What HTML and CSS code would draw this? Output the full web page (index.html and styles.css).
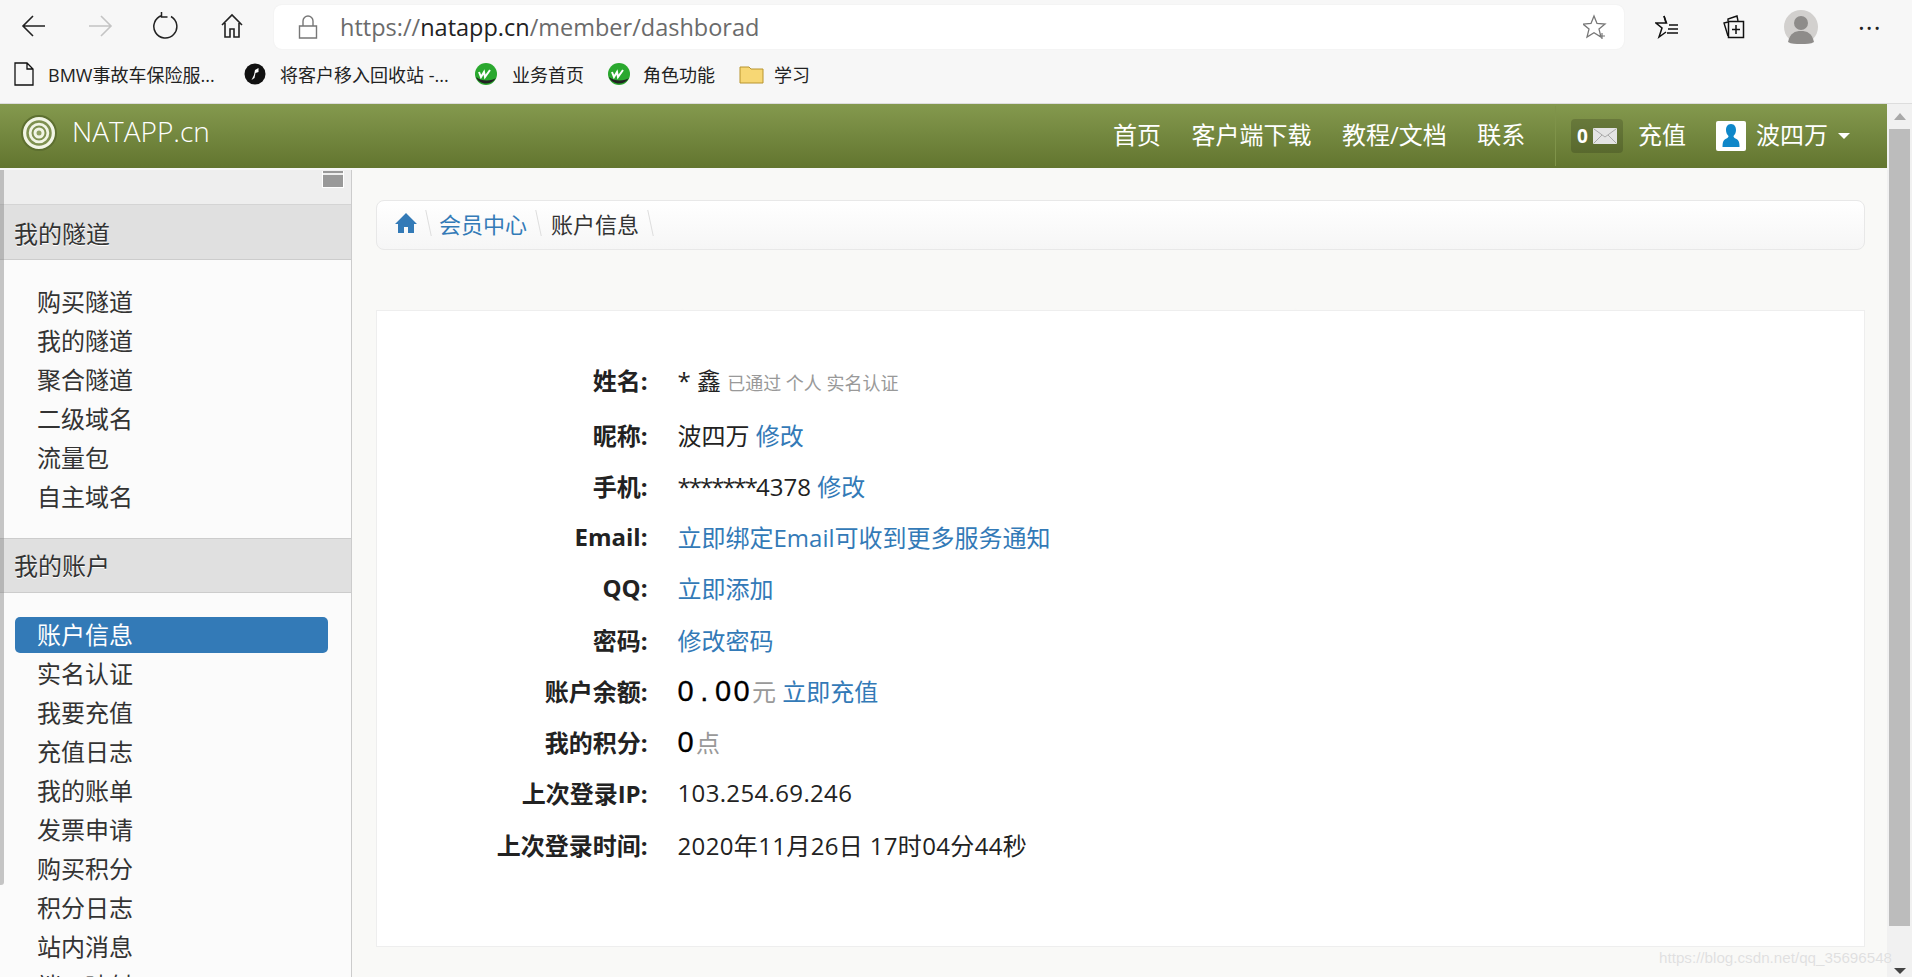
FILE: index.html
```html
<!DOCTYPE html>
<html lang="zh-CN">
<head>
  <meta charset="UTF-8" />
  <title>NATAPP - 账户信息</title>
  <link rel="stylesheet" href="styles.css">
</head>
<body>

<!-- browser bars -->
<div class="toolbar">
  <div class="tool-left">
    <svg class="ic" width="26" height="26" viewBox="0 0 26 26"><path d="M24 13H2M12 3 2 13l10 10" fill="none" stroke="#222" stroke-width="1.6"/></svg>
    <svg class="ic" width="26" height="26" viewBox="0 0 26 26"><path d="M2 13h22M14 3l10 10-10 10" fill="none" stroke="#c4c4c4" stroke-width="1.6"/></svg>
    <svg class="ic" width="26" height="28" viewBox="0 0 26 28"><path d="M9 3.5A11.5 11.5 0 1 0 18 4.5M8.500 0v5h6" fill="none" stroke="#222" stroke-width="1.5"/></svg>
    <svg class="ic" width="24" height="26" viewBox="0 0 24 26"><path d="M2 12 12 2l10 10M5 10v14h5v-8h4v8h5V10" fill="none" stroke="#222" stroke-width="1.6"/></svg>
  </div>
  <div class="address">
    <svg width="20" height="24" viewBox="0 0 20 24"><path d="M5 11V6a5 5 0 0 1 10 0v5M1.500 11h17v12h-17z" fill="none" stroke="#777" stroke-width="1.4"/></svg>
    <span class="url">https://<b>natapp.cn</b>/member/dashborad</span>
    <svg class="url-star" width="24" height="26" viewBox="0 0 24 26"><path d="M11 2l3 7.500 8 .6-6 5 2 7.900-7-4.300-7 4.300 2-7.900-6-5 8-.6z" fill="none" stroke="#777" stroke-width="1.300"/><path d="M19 19v6M16 22h6" stroke="#777" stroke-width="1.200"/></svg>
  </div>
  <div class="tool-right">
    <svg width="24" height="26" viewBox="0 0 24 26"><path d="M9 2l2.500 7H1l6 5-3 9 7-5" fill="none" stroke="#111" stroke-width="1.500"/><path d="M9 2l2 7M14 11h9M13 15h10M12 19h11" stroke="#111" stroke-width="1.500"/></svg>
    <svg width="23" height="26" viewBox="0 0 23 26"><path d="M6 7V5l9-3 1 5M6 22 2 9l4-1" fill="none" stroke="#111" stroke-width="1.400"/><path d="M6.500 7.500h15v16h-15zM14 11v9M10 15.500h8" fill="none" stroke="#111" stroke-width="1.500"/></svg>
    <svg width="34" height="34" viewBox="0 0 34 34"><ellipse cx="17" cy="17" rx="17" ry="17" fill="#d2d0ce"/><ellipse cx="17" cy="13" rx="7" ry="7" fill="#8e8c8a"/><path d="M4 32c2-9 7-11 13-11s11 2 13 11c-3 2-8 2-13 2s-10 0-13-2z" fill="#8e8c8a"/></svg>
    <span class="more">&middot;&middot;&middot;</span>
  </div>
</div>

<div class="bookmarks">
  <div class="bm">
    <svg width="20" height="24" viewBox="0 0 20 24"><path d="M1 1h12l6 6v16H1zM13 1v6h6" fill="none" stroke="#111" stroke-width="1.300"/></svg>
    <span class="bm-first">BMW事故车保险服...</span>
  </div>
  <div class="bm">
    <svg width="22" height="22" viewBox="0 0 22 22"><circle cx="11" cy="11" r="10.500" fill="#111"/><path d="M14.500 5 11 7l-1 5-2.500 5 3-2 1-5 3-1z" fill="#fff"/></svg>
    <span class="bm-second">将客户移入回收站 -...</span>
  </div>
  <div class="bm bm-third">
    <svg width="24" height="24" viewBox="0 0 24 24"><circle cx="12" cy="12" r="11" fill="#2aa82e"/><path d="M2 15c3 8 15 9 20 1-4 3-14 4-20-1z" fill="#222"/><path d="M5 10l2 5 3-5 1 5 5-7" fill="none" stroke="#fff" stroke-width="2"/></svg>
    <span>业务首页</span>
  </div>
  <div class="bm bm-fourth">
    <svg width="24" height="24" viewBox="0 0 24 24"><circle cx="12" cy="12" r="11" fill="#2aa82e"/><path d="M2 15c3 8 15 9 20 1-4 3-14 4-20-1z" fill="#222"/><path d="M5 10l2 5 3-5 1 5 5-7" fill="none" stroke="#fff" stroke-width="2"/></svg>
    <span>角色功能</span>
  </div>
  <div class="bm bm-fifth">
    <svg width="25" height="20" viewBox="0 0 25 20"><path d="M1 3h9l2 2h12v14H1z" fill="#f7d774" stroke="#b8942f"/></svg>
    <span>学习</span>
  </div>
</div>

<div class="page">
  <div class="site">
    <header class="navbar">
      <a class="brand">
        <svg width="38" height="36" viewBox="0 0 38 36">
          <ellipse cx="19" cy="18" rx="17" ry="17" fill="#f2f5e6" stroke="#5d6f30" stroke-width="2"/>
          <ellipse cx="19" cy="18" rx="11.500" ry="11.500" fill="none" stroke="#7e9050" stroke-width="2.500"/>
          <ellipse cx="19" cy="18" rx="6.500" ry="6.500" fill="none" stroke="#7e9050" stroke-width="2"/>
          <circle cx="19" cy="18" r="2.500" fill="#8fa063"/>
        </svg>
        <span class="brand-name">NATAPP.cn</span>
      </a>
      <nav class="nav-links">
        <a>首页</a>
        <a>客户端下载</a>
        <a>教程/文档</a>
        <a>联系</a>
      </nav>
      <div class="nav-user">
        <span class="msg-badge">0
          <svg width="24" height="16" viewBox="0 0 24 16"><rect width="24" height="16" rx="1" fill="#e4e4e4"/><path d="M1 1l11 8 11-8M1 15l8-8M23 15l-8-8" fill="none" stroke="#aaa"/></svg>
        </span>
        <a class="nav-pay">充值</a>
        <span class="nav-avatar">
          <svg width="30" height="30" viewBox="0 0 30 30"><rect width="30" height="30" rx="2" fill="#fff"/><path d="M15 3c3.500 0 5 3 5 6 0 2.500-1 4.500-2.500 6 0 1 .5 2 3 3 2 1 3 3 3 8H6.500c0-5 1-7 3-8 2.500-1 3-2 3-3C11 13.500 10 11.500 10 9c0-3 1.500-6 5-6z" fill="#0f87c9"/></svg>
        </span>
        <span class="nav-name">波四万</span>
        <span class="caret"></span>
      </div>
    </header>

    <div class="layout">
      <aside class="sidebar">
        <div class="side-scroll"></div>
        <div class="side-top"><span class="side-toggle"></span></div>

        <div class="side-head">我的隧道</div>
        <ul class="side-list">
          <li>购买隧道</li>
          <li>我的隧道</li>
          <li>聚合隧道</li>
          <li>二级域名</li>
          <li>流量包</li>
          <li>自主域名</li>
        </ul>

        <div class="side-head">我的账户</div>
        <ul class="side-list">
          <li class="active">账户信息</li>
          <li>实名认证</li>
          <li>我要充值</li>
          <li>充值日志</li>
          <li>我的账单</li>
          <li>发票申请</li>
          <li>购买积分</li>
          <li>积分日志</li>
          <li>站内消息</li>
          <li>端口映射</li>
        </ul>
      </aside>

      <main class="main">
        <div class="crumbs">
          <span class="crumb">
            <svg width="22" height="22" viewBox="0 0 22 22"><path d="M11 1 0 12h3v9h6v-6h4v6h6v-9h3z" fill="#337ab7"/></svg>
          </span>
          <span class="crumb link">会员中心</span>
          <span class="crumb">账户信息</span>
        </div>

        <section class="card">
          <div class="row row-first">
            <label>姓名:</label>
            <div class="val">* 鑫 <small>已通过 个人 实名认证</small></div>
          </div>
          <div class="row">
            <label>昵称:</label>
            <div class="val">波四万 <a>修改</a></div>
          </div>
          <div class="row">
            <label>手机:</label>
            <div class="val"><span class="stars">*******</span>4378 <a>修改</a></div>
          </div>
          <div class="row">
            <label>Email:</label>
            <div class="val"><a>立即绑定Email可收到更多服务通知</a></div>
          </div>
          <div class="row">
            <label>QQ:</label>
            <div class="val"><a>立即添加</a></div>
          </div>
          <div class="row">
            <label>密码:</label>
            <div class="val"><a>修改密码</a></div>
          </div>
          <div class="row">
            <label>账户余额:</label>
            <div class="val"><span class="num">0<span class="dot">.</span>00</span><span class="unit">元</span> <a>立即充值</a></div>
          </div>
          <div class="row">
            <label>我的积分:</label>
            <div class="val"><span class="num">0</span><span class="unit">点</span></div>
          </div>
          <div class="row">
            <label>上次登录IP:</label>
            <div class="val digits">103.254.69.246</div>
          </div>
          <div class="row">
            <label>上次登录时间:</label>
            <div class="val digits">2020年11月26日 17时04分44秒</div>
          </div>
        </section>
      </main>
    </div>
  </div>

  <div class="scrollbar">
    <span class="arrow-up"></span>
    <div class="thumb"></div>
    <span class="arrow-down"></span>
  </div>
</div>

<div class="watermark">https://blog.csdn.net/qq_35696548</div>

</body>
</html>
```

FILE: styles.css
```css
* { box-sizing: border-box; margin: 0; padding: 0; }
html, body {
  width: 1912px;
  height: 977px;
  overflow: hidden;
}
body {
  font-family: 'Open Sans', 'Noto Sans CJK SC', sans-serif;
  background: #f7f7f7;
  color: #333;
  font-size: 24px;
  position: relative;
}

/* browser bars */
.toolbar {
  height: 60px;
  display: flex;
  align-items: flex-start;
  background: #f7f7f7;
  padding-top: 5px;
}
.tool-left {
  width: 274px;
  height: 42px;
  display: flex;
  align-items: center;
  padding-left: 21px;
}
.tool-left svg:nth-child(1) { margin-right: 40px; }
.tool-left svg:nth-child(2) { margin-right: 40px; }
.tool-left svg:nth-child(3) { margin-right: 41px; }
.address {
  width: 1350px;
  height: 44px;
  background: #fff;
  border-radius: 8px;
  display: flex;
  align-items: center;
  padding: 0 17px 0 24px;
  box-shadow: 0 0 2px rgba(0,0,0,0.06);
}
.url {
  flex-grow: 1;
  margin-left: 22px;
  font-size: 23.500px;
  color: #6b6b6b;
  white-space: nowrap;
}
.url b {
  font-weight: normal;
  color: #222;
}
.tool-right {
  flex-grow: 1;
  height: 44px;
  display: flex;
  align-items: center;
  padding-left: 31px;
  gap: 43px;
}
.tool-right svg:nth-child(3) { margin-left: -4px; margin-right: -3px; }
.more {
  font-size: 26px;
  line-height: 26px;
  letter-spacing: 1px;
  color: #222;
}
.bookmarks {
  height: 44px;
  display: flex;
  align-items: center;
  padding: 0 0 15px 14px;
  background: #f7f7f7;
  gap: 25px;
  font-size: 18px;
  color: #222;
  border-bottom: 1px solid #ddd;
}
.bm {
  display: flex;
  align-items: center;
  gap: 14px;
}
.bm-first { width: 171px; white-space: nowrap; }
.bm-second { width: 169px; white-space: nowrap; }
.bm-third { margin-right: -2px; }
.bm-fourth { gap: 12px; margin-right: -1px; }
.bm-fifth { gap: 10px; }

/* page */
.page {
  display: flex;
  height: 873px;
}
.site {
  width: 1887px;
}
.navbar {
  height: 64px;
  display: flex;
  align-items: center;
  background: linear-gradient(#84994e, #62752f);
  color: #fff;
  margin-bottom: 2px;
}
.brand {
  width: 1113px;
  display: flex;
  align-items: center;
  padding-left: 20px;
  gap: 14px;
  font-size: 28px;
  font-weight: 300;
  margin-top: -6px;
}
.brand-name { padding-bottom: 4px; }
.nav-links {
  width: 442px;
  display: flex;
  gap: 30.500px;
  font-size: 24px;
  padding-bottom: 5px;
}
.nav-user {
  height: 60px;
  border-left: 1px solid #7f9349;
  display: flex;
  align-items: center;
  padding-left: 15px;
}
.msg-badge {
  width: 52px;
  height: 34px;
  background: rgba(0,0,0,0.16);
  border-radius: 4px;
  display: flex;
  align-items: center;
  gap: 5px;
  padding-left: 6px;
  font-size: 19px;
  font-weight: bold;
}
.nav-pay {
  margin-left: 15px;
  width: 78px;
  padding-bottom: 5px;
}
.nav-avatar {
  height: 30px;
  display: block;
}
.nav-name {
  margin-left: 10px;
  width: 82px;
  padding-bottom: 5px;
}
.caret {
  border-top: 6px solid #fff;
  border-left: 6px solid transparent;
  border-right: 6px solid transparent;
}

.layout {
  display: flex;
  height: 807px;
}

/* sidebar */
.sidebar {
  width: 352px;
  background: #fbfbfb;
  border-right: 1px solid #ccc;
  position: relative;
  overflow: hidden;
}
.side-scroll {
  position: absolute;
  left: 0;
  top: 0;
  width: 4px;
  height: 715px;
  background: rgba(130,130,130,0.45);
  border-radius: 0 0 3px 0;
}
.side-top {
  height: 35px;
  background: #eee;
  border-bottom: 1px solid #d4d4d4;
  display: flex;
  justify-content: flex-end;
  padding: 1px 7px 0 0;
}
.side-toggle {
  width: 22px;
  height: 17px;
  background: linear-gradient(#999 2px, #eee 2px, #eee 4px, #999 4px);
  border: 1px solid #fff;
  border-top: 0;
}
.side-head {
  height: 55px;
  line-height: 58px;
  padding-left: 14px;
  background: #e0e0e0;
  border-bottom: 1px solid #ccc;
  text-shadow: 0 1px 0 #fff;
}
.side-list {
  list-style: none;
  padding: 24px 0 20px 15px;
  border-bottom: 1px solid #ccc;
}
.side-list li {
  width: 313px;
  height: 36px;
  line-height: 36px;
  margin-bottom: 3px;
  padding-left: 22px;
  border-radius: 5px;
  color: #333;
}
.side-list li.active {
  background: #337ab7;
  color: #fff;
}
.side-list + .side-head { height: 54px; line-height: 53px; }

/* main */
.main {
  flex-grow: 1;
  padding: 30px 22px 0 24px;
  background-color: #f9f9f7;
  background-image:
    radial-gradient(ellipse 14px 3px at 40px 60px, #f1f1ed, transparent),
    radial-gradient(ellipse 4px 12px at 330px 150px, #f2f2ee, transparent),
    radial-gradient(circle at 190px 330px, #eeeeea 1px, transparent 3px),
    radial-gradient(ellipse 18px 4px at 480px 300px, #f2f2ee, transparent),
    radial-gradient(circle at 560px 70px, #efefeb 1px, transparent 3px);
  background-size: 613px 431px;
}
.crumbs {
  height: 50px;
  display: flex;
  align-items: center;
  padding: 0 0 5px 18px;
  background: linear-gradient(#fff, #f6f6f6);
  border: 1px solid #e8e8e8;
  border-radius: 8px;
  font-size: 22px;
  gap: 22px;
  color: #333;
}
.crumb {
  display: flex;
  align-items: center;
  position: relative;
}
.crumb:last-child { margin-left: 2px; }
.crumb::after {
  content: "";
  position: absolute;
  right: -12px;
  top: 50%;
  margin-top: -13px;
  width: 1px;
  height: 26px;
  background: #ddd;
  transform: skewX(12deg);
}
.crumb.link { color: #337ab7; }

.card {
  height: 637px;
  margin-top: 60px;
  background: #fff;
  border: 1px solid #eee;
  padding-top: 44.500px;
}
.row {
  display: flex;
  align-items: center;
  height: 51.250px;
  white-space: nowrap;
}
.row-first { height: 53px; padding-bottom: 5px; }
.row label {
  width: 270.500px;
  text-align: right;
  font-weight: bold;
  color: #222;
}
.val {
  margin-left: 30px;
  color: #222;
}
.val a { color: #337ab7; }
.val small {
  font-size: 18px;
  color: #999;
}
.stars { letter-spacing: -2px; }
.digits { letter-spacing: .35px; }
.num {
  font-family: 'Liberation Sans', sans-serif;
  font-size: 29px;
  letter-spacing: 2.400px;
  color: #000;
  -webkit-text-stroke: .3px #000;
}
.dot {
  display: inline-block;
  width: 19px;
  text-align: center;
}
.unit { color: #999; }

/* scrollbar */
.scrollbar {
  flex-grow: 1;
  background: #f1f1f1;
  display: flex;
  flex-direction: column;
  align-items: center;
  padding-top: 9px;
}
.arrow-up {
  border-bottom: 7px solid #a8a8a8;
  border-left: 6px solid transparent;
  border-right: 6px solid transparent;
  margin-bottom: 9px;
}
.thumb {
  width: 21px;
  height: 797px;
  background: #bcbcbc;
}
.arrow-down {
  margin-top: 42px;
  border-top: 6px solid #444;
  border-left: 6px solid transparent;
  border-right: 6px solid transparent;
}

.watermark {
  position: absolute;
  left: 1659px;
  top: 947px;
  font-family: 'Liberation Sans', sans-serif;
  font-size: 15.200px;
  line-height: 22px;
  color: #e0e0e0;
  text-shadow: 0 0 1px #fff;
}
```
